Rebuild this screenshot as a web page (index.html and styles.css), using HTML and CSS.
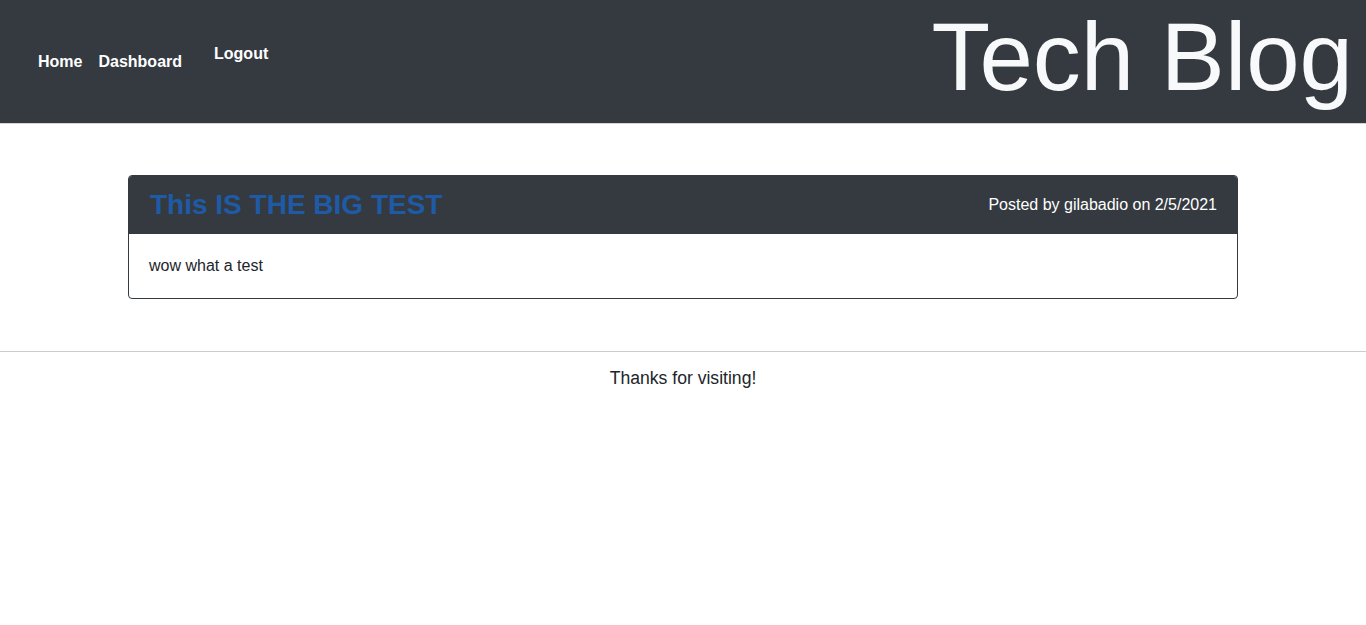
FILE: index.html
```html
<!DOCTYPE html>
<html lang="en">
<head>
<meta charset="utf-8">
<title>Tech Blog</title>
<link rel="stylesheet" href="styles.css">
</head>
<body>
<header class="site-header">
  <nav class="nav">
    <a class="nav-link" href="#">Home</a>
    <a class="nav-link" href="#">Dashboard</a>
    <a class="nav-link logout" href="#">Logout</a>
  </nav>
  <h1 class="site-title">Tech Blog</h1>
</header>
<main class="container">
  <article class="post">
    <div class="post-header">
      <h3 class="post-title">This IS THE BIG TEST</h3>
      <span class="post-meta">Posted by gilabadio on 2/5/2021</span>
    </div>
    <div class="post-body">wow what a test</div>
  </article>
</main>
<hr class="divider">
<footer class="site-footer">Thanks for visiting!</footer>
</body>
</html>
```
FILE: styles.css
```css
* { box-sizing: border-box; }
body {
  margin: 0;
  font-family: "Liberation Sans", Arial, sans-serif;
  font-size: 16px;
  color: #212529;
  background: #fff;
}
.site-header {
  height: 124px;
  background: #343a40;
  border-bottom: 1px solid #d4d4d4;
  display: flex;
  justify-content: space-between;
  align-items: flex-start;
}
.nav {
  display: flex;
  align-items: center;
  padding-left: 38px;
  height: 123px;
}
.nav-link {
  color: #fff;
  font-weight: bold;
  font-size: 16px;
  line-height: 18px;
  text-decoration: none;
  margin-right: 16px;
}
.nav-link.logout {
  margin-left: 16px;
  margin-bottom: 16px;
}
.site-title {
  margin: 2px 13px 0 0;
  font-weight: normal;
  font-size: 96px;
  line-height: 110px;
  color: #f8f9fa;
}
.container {
  width: 1110px;
  margin: 51px auto 0;
}
.post {
  border: 1px solid #343a40;
  border-radius: 4px;
  overflow: hidden;
}
.post-header {
  height: 58px;
  background: #343a40;
  display: flex;
  justify-content: space-between;
  align-items: center;
  padding: 0 20px 0 21px;
}
.post-title {
  margin: 0;
  font-size: 28px;
  font-weight: bold;
  color: #1f5aa6;
  line-height: 1.2;
}
.post-meta {
  color: #fff;
  font-size: 16px;
}
.post-body {
  padding: 20px;
  line-height: 24px;
}
.divider {
  margin: 52px 0 0;
  border: 0;
  border-top: 1px solid #ccc;
  height: 0;
}
.site-footer {
  margin-top: 13px;
  text-align: center;
  font-size: 17.6px;
  line-height: 26px;
}
```
